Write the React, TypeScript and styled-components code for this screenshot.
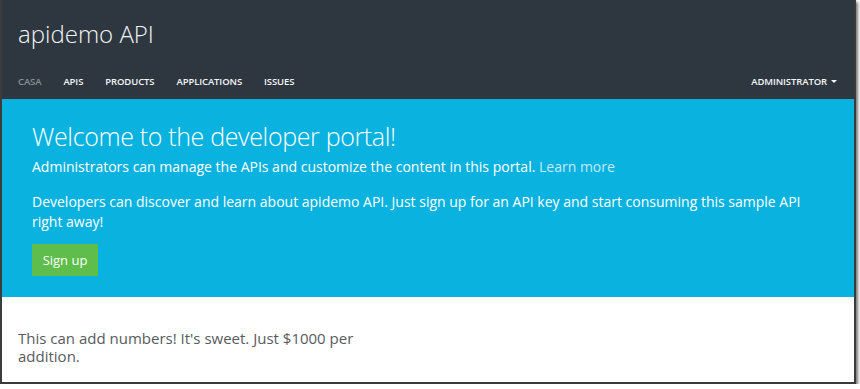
import React from "react";
import styled, { createGlobalStyle } from "styled-components";

const Global = createGlobalStyle`
  html, body { margin: 0; padding: 0; background: #ffffff; }
  body { font-family: "Open Sans", "Noto Sans", sans-serif; }
  * { box-sizing: border-box; }
`;

const Frame = styled.div`
  width: 856px;
  height: 384px;
  border-left: 2px solid #3c3c3c;
  border-right: 2px solid #3a3a3a;
  border-bottom: 2px solid #3a3a3a;
  box-shadow: 2px 2px 3px rgba(0, 0, 0, 0.55);
  display: flex;
  flex-direction: column;
  overflow: hidden;
  background: #fff;
`;

const Header = styled.header`
  background: #2e3740;
  height: 99px;
  display: flex;
  flex-direction: column;
  padding: 0 17px 0 16px;
`;

const Title = styled.h1`
  margin: 0;
  padding-top: 18px;
  height: 66px;
  font-weight: 300;
  font-size: 24px;
  line-height: 32px;
  color: #f2f4f5;
  letter-spacing: 0;
`;

const Nav = styled.nav`
  display: flex;
  align-items: center;
  gap: 22px;
  height: 30px;
`;

const NavItem = styled.a<{ $muted?: boolean }>`
  font-size: 9.5px;
  font-weight: 600;
  text-transform: uppercase;
  color: ${(p) => (p.$muted ? "#8a9097" : "#f4f6f7")};
  text-decoration: none;
  letter-spacing: -0.1px;
`;

const Spacer = styled.div`
  flex: 1;
`;

const Caret = styled.span`
  display: inline-block;
  margin-left: 4px;
  width: 0;
  height: 0;
  border-left: 3px solid transparent;
  border-right: 3px solid transparent;
  border-top: 3px solid #f4f6f7;
  vertical-align: middle;
`;

const Hero = styled.section`
  background: #0ab2e0;
  height: 198px;
  padding: 20px 30px 0 30px;
  color: #ffffff;
`;

const HeroTitle = styled.h2`
  margin: 0 0 4px 0;
  font-weight: 300;
  font-size: 25px;
  line-height: 34px;
  letter-spacing: -0.35px;
`;

const HeroText = styled.p`
  margin: 0 0 15px 0;
  font-size: 14px;
  line-height: 20px;
  max-width: 785px;
`;

const Learn = styled.a`
  color: #c3eaf6;
  text-decoration: none;
`;

const Button = styled.button`
  margin-top: -3px;
  background: #5ebd4b;
  border: none;
  color: #fff;
  font-family: inherit;
  font-size: 13px;
  width: 66px;
  height: 32px;
  padding: 0;
`;

const Content = styled.section`
  flex: 1;
  padding: 32px 16px 0 16px;
`;

const Description = styled.p`
  margin: 0;
  width: 370px;
  font-size: 15px;
  line-height: 18px;
  color: #575b5e;
`;

export default function App() {
  return (
    <>
      <Global />
      <Frame>
        <Header>
          <Title>apidemo API</Title>
          <Nav>
            <NavItem $muted>Casa</NavItem>
            <NavItem>APIs</NavItem>
            <NavItem>Products</NavItem>
            <NavItem>Applications</NavItem>
            <NavItem>Issues</NavItem>
            <Spacer />
            <NavItem>
              Administrator
              <Caret />
            </NavItem>
          </Nav>
        </Header>
        <Hero>
          <HeroTitle>Welcome to the developer portal!</HeroTitle>
          <HeroText>
            Administrators can manage the APIs and customize the content in this
            portal. <Learn>Learn more</Learn>
          </HeroText>
          <HeroText>
            Developers can discover and learn about apidemo API. Just sign up for
            an API key and start consuming this sample API right away!
          </HeroText>
          <Button>Sign up</Button>
        </Hero>
        <Content>
          <Description>
            This can add numbers! It's sweet. Just $1000 per addition.
          </Description>
        </Content>
      </Frame>
    </>
  );
}
